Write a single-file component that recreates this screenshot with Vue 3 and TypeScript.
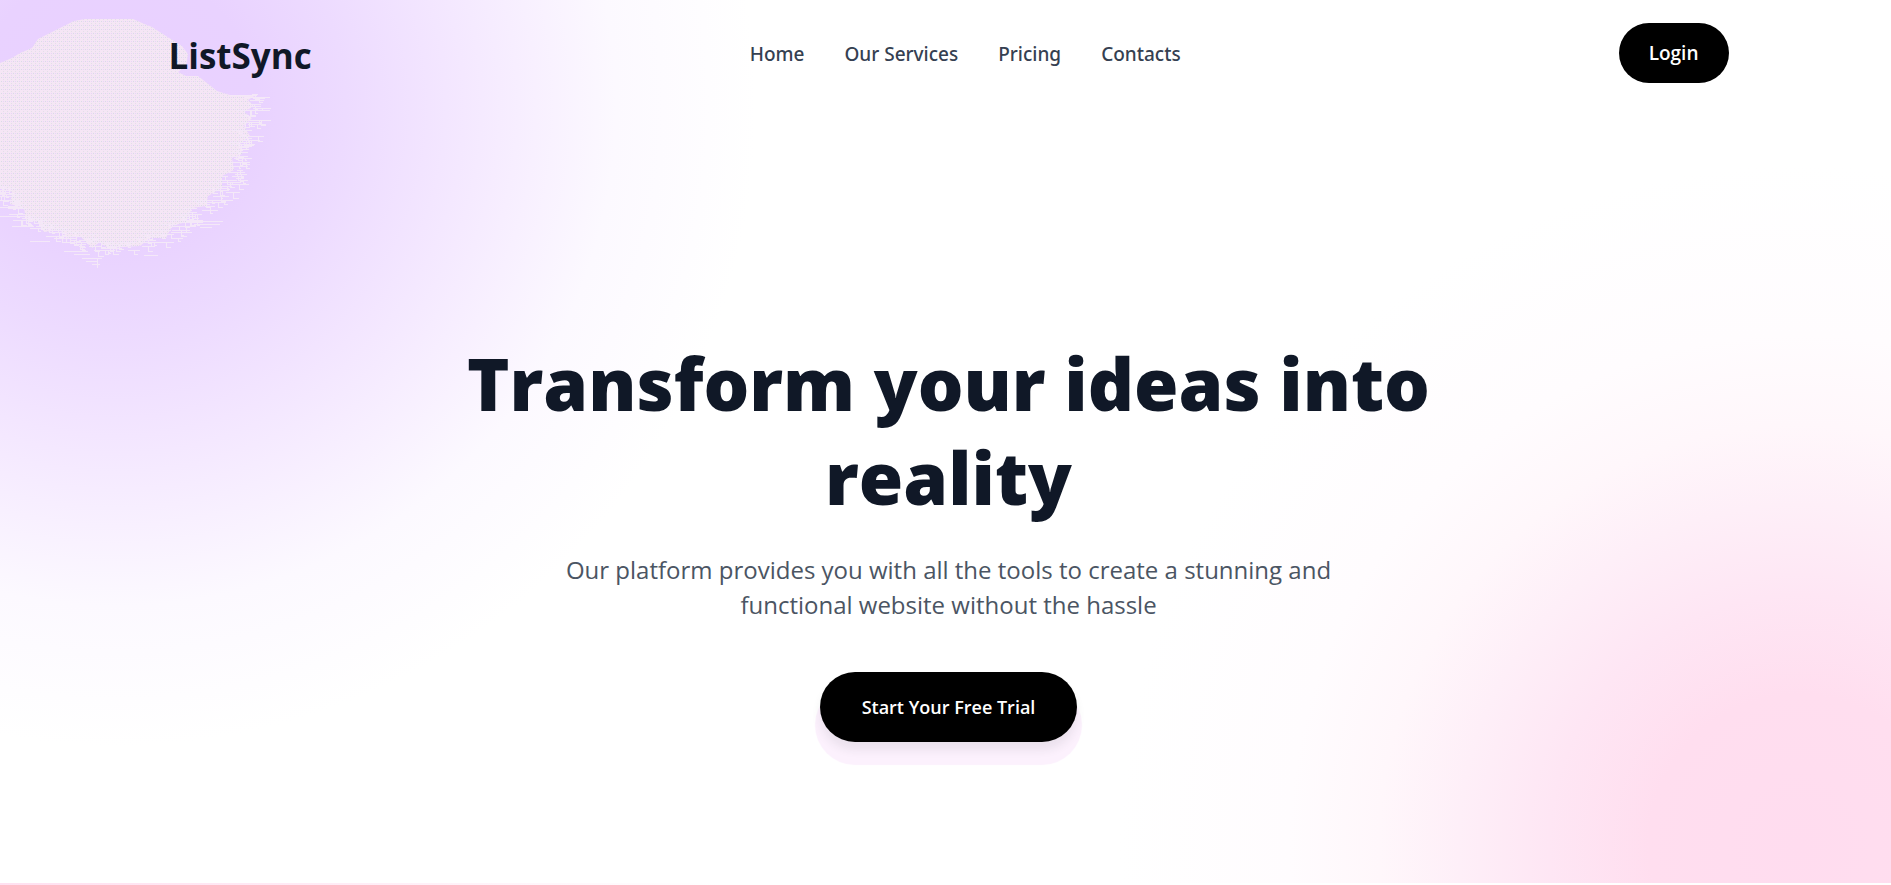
<script setup lang="ts">
interface NavLink {
  label: string
  href: string
}

const links: NavLink[] = [
  { label: 'Home', href: '#home' },
  { label: 'Our Services', href: '#services' },
  { label: 'Pricing', href: '#pricing' },
  { label: 'Contacts', href: '#contacts' },
]

// Small seeded generator, so the ragged edge is the same on every load.
let seed = 11
function random(): number {
  seed = (seed * 16807) % 2147483647
  return seed / 2147483647
}

// Lower right edge of the cloud, from the right tip round to the left side.
const edge: [number, number][] = [
  [256, 98], [252, 120], [248, 138], [240, 158], [234, 176], [222, 192],
  [204, 206], [188, 220], [168, 234], [140, 243], [108, 246], [84, 242],
  [66, 234], [46, 228], [28, 216], [12, 198], [0, 188],
]

// Thin horizontal threads with short hooks that fray the edge.
const threads: string = edge
  .flatMap(([x, y], i) => {
    const [nx, ny] = edge[Math.min(i + 1, edge.length - 1)]
    return Array.from({ length: 11 }, () => {
      const t = random()
      const px = Math.round(x + (nx - x) * t + (random() - 0.5) * 18)
      const py = Math.round((y + (ny - y) * t + (random() - 0.5) * 16) / 2) * 2
      const w = 3 + Math.round(random() * 7)
      const hook = 2 + Math.round(random() * 4)
      return `M${px - w} ${py}h${w * 2}m-${w} 0v${hook}h${hook}`
    })
  })
  .join('')
</script>

<template>
  <div class="page">
    <svg class="cloud" width="280" height="280" viewBox="0 0 280 280" aria-hidden="true">
      <defs>
        <pattern id="weave" width="4" height="4" patternUnits="userSpaceOnUse">
          <rect width="4" height="4" fill="#f5e6f5" />
          <rect x="1" y="1" width="1" height="1" fill="#d9dce6" />
          <rect x="3" y="3" width="1" height="1" fill="#e3dfe9" />
          <rect x="3" y="1" width="1" height="1" fill="#e9d5f8" />
        </pattern>
      </defs>
      <path
        fill="url(#weave)"
        d="M0 63L12 58L20 53L32 48L38 39L52 32L64 26L74 21L85 19H133L142 23L152 27L166 36L182 46L188 54L186 66L178 72L186 76H198L207 83L217 91L230 95H256L248 100L254 106L244 112L252 118L244 126L250 136L240 144L242 154L232 158L234 170L222 176V188L208 196L206 206L192 208L186 222L172 226L166 238L150 238L140 246L108 248L100 242L92 248L80 236L68 238L60 230L44 232L38 222L26 220L24 208L10 204L12 192L0 188Z"
      />
      <path class="threads" :d="threads" />
      <path
        class="threads"
        d="M230 95h27M245 97h25M250 100h14M252 110h18M186 221h37M194 224h26M200 227h12M0 207h18M0 216h18M12 226h22M30 241h20M64 251h24M74 254h16M82 258h20M86 261h12M92 264h8M97 258v10M144 255h14"
      />
    </svg>

    <header class="topbar">
      <a class="brand" href="#home">ListSync</a>
      <nav class="nav" aria-label="Main">
        <a v-for="link in links" :key="link.label" :href="link.href">{{ link.label }}</a>
      </nav>
      <button class="login" type="button">Login</button>
    </header>

    <main class="hero">
      <h1>Transform your ideas into reality</h1>
      <p>Our platform provides you with all the tools to create a stunning and functional website without the hassle</p>
      <button class="cta" type="button">Start Your Free Trial</button>
    </main>
    <div class="next" aria-hidden="true"></div>
  </div>
</template>

<style>
body {
  margin: 0;
  background: #fff;
}
</style>

<style scoped>
.page {
  position: relative;
  display: flex;
  flex-direction: column;
  box-sizing: border-box;
  min-height: 100vh;
  padding-left: 6px;
  overflow: hidden;
  font-family: "Open Sans", "Noto Sans", sans-serif;
  color: #101827;
  background:
    radial-gradient(circle at 116px 106px, #e9d0ff 0, #e9d2ff 140px, #eddbff 230px, #f3e6ff 330px, #f8f0ff 420px, #fcf9ff 500px, rgba(255, 255, 255, 0) 640px),
    radial-gradient(circle at calc(100% - 92px) calc(100% - 40px), #ffdcef 0, #ffdeef 150px, #fee6f4 250px, #feeff8 340px, #fff7fb 420px, #fffcfe 510px, rgba(255, 255, 255, 0) 680px),
    #fff;
}

.cloud {
  position: absolute;
  top: 0;
  left: 0;
}

.threads {
  fill: none;
  stroke: #f4e8f8;
  stroke-width: 1;
  shape-rendering: crispEdges;
}

.topbar {
  position: relative;
  display: flex;
  align-items: center;
  justify-content: space-between;
  width: 100%;
  max-width: 1560px;
  height: 106px;
  margin: 0 auto;
}

.brand {
  padding-top: 6px;
  font-size: 35px;
  line-height: 48px;
  font-weight: 700;
  color: inherit;
  text-decoration: none;
}

.nav {
  display: flex;
  gap: 40px;
  padding-top: 2px;
}

.nav a {
  font-family: "Noto Sans", "Open Sans", sans-serif;
  font-size: 19px;
  line-height: 28px;
  font-weight: 500;
  color: #354051;
  text-decoration: none;
}

button {
  border: 0;
  border-radius: 40px;
  font-family: inherit;
  font-weight: 600;
  color: #fff;
  background: #000;
  cursor: pointer;
}

.login {
  padding: 16px 30px;
  font-size: 19px;
  line-height: 28px;
}

.hero {
  position: relative;
  display: flex;
  flex: 1;
  flex-direction: column;
  align-items: center;
  padding: 230px 24px 0;
  text-align: center;
}

h1 {
  max-width: 1080px;
  margin: 0;
  font-size: 72px;
  line-height: 94px;
  font-weight: 800;
}

p {
  max-width: 800px;
  margin: 28px 0 0;
  font-size: 24px;
  line-height: 35px;
  color: #4b5563;
}

.cta {
  margin-top: 50px;
  padding: 21px 42px;
  font-size: 18px;
  line-height: 28px;
  box-shadow:
    0 8px 10px rgba(40, 50, 45, 0.08),
    0 18px 1px 5px #fcf1fd;
}

.next {
  height: 2px;
  margin-left: -6px;
  background: linear-gradient(90deg, #ffe0f0 0, #ffeaf5 300px, #fff 720px);
}
</style>
